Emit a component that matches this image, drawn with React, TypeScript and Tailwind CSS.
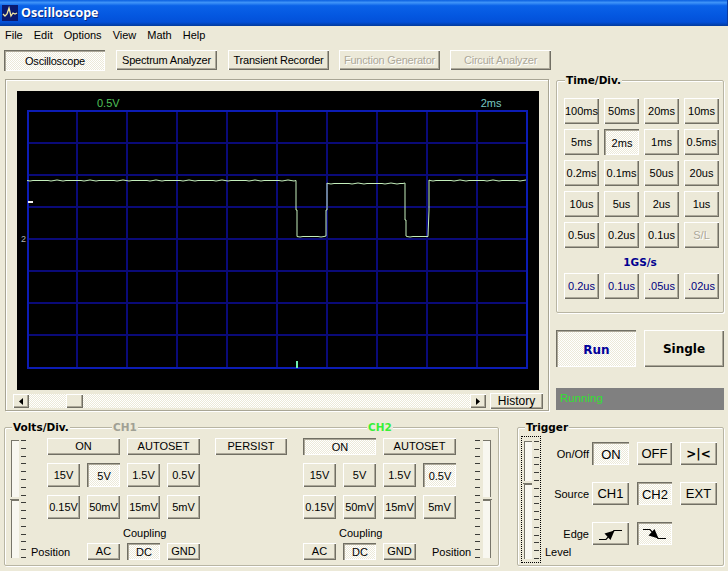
import type { ReactNode } from "react";

const SANS = "font-['Liberation_Sans',Arial,sans-serif]";
const BOLD = "font-['DejaVu_Sans',Verdana,sans-serif] font-bold";
const DITHER = "bg-[repeating-conic-gradient(#ffffff_0_25%,#ece9d8_0_50%)] bg-[length:2px_2px]";
const RAISED = "shadow-[inset_1px_1px_0_#ffffff,inset_-1px_-1px_0_#716f64,inset_-2px_-2px_0_#aca899]";
const SUNKEN = "shadow-[inset_1px_1px_0_#716f64,inset_2px_2px_0_#aca899,inset_-1px_-1px_0_#ffffff]";

function Btn({ children, on, off, size = "text-[11px]", className = "" }: { children?: ReactNode; on?: boolean; off?: boolean; size?: string; className?: string }) {
  return (
    <div
      className={`flex items-center justify-center whitespace-nowrap leading-none ${size} ${
        on ? `${DITHER} ${SUNKEN} pl-px pt-[2px]` : `bg-[#ece9d8] ${RAISED}`
      } ${off ? "text-[#aca899] [text-shadow:1px_1px_0_#ffffff]" : ""} ${className}`}
    >
      {children}
    </div>
  );
}

function Group({ title, className = "", children }: { title: ReactNode; className?: string; children: ReactNode }) {
  return (
    <div className={`relative rounded-[2px] border border-[#b8b5a3] shadow-[1px_1px_0_#ffffff,inset_1px_1px_0_#ffffff] ${className}`}>
      {title}
      {children}
    </div>
  );
}

function Legend({ children, className = "" }: { children: ReactNode; className?: string }) {
  return <span className={`absolute -top-[7px] bg-[#ece9d8] text-[10.5px] leading-[13px] ${BOLD} ${className}`}>{children}</span>;
}

function Ticks({ className = "" }: { className?: string }) {
  return (
    <div className={`flex h-[118px] w-[5px] flex-col justify-between ${className}`}>
      {Array.from({ length: 16 }, (_, i) => (
        <div key={i} className="h-px w-full bg-[#3c3c38]" />
      ))}
    </div>
  );
}

function Track({ top }: { top: number }) {
  return (
    <div className="flex h-[118px] w-[8px] flex-col bg-[#f8f7f0]">
      <div className="border-l border-t border-[#77756a] bg-[#f8f7f0]" style={{ height: top }} />
      <div className="h-[3px] -ml-px w-[9px] border-b border-[#77756a] bg-[#ece9d8]" />
      <div className="flex-1 border-l border-t border-[#77756a]" />
    </div>
  );
}

function Channel({ on, volts, position }: { on: boolean; volts: string; position: "left" | "right" }) {
  const row = (labels: string[]) =>
    labels.map((v) => (
      <Btn key={v} on={v === volts} className="h-[24px]">
        {v}
      </Btn>
    ));
  return (
    <div className="grid grid-cols-[repeat(4,33px)] grid-rows-[17px_32px_32px_24px_17px] gap-x-[7px]">
      <Btn on={on} className="col-span-2 h-[17px]">ON</Btn>
      <Btn className="col-span-2 h-[17px]">AUTOSET</Btn>
      <div className="col-span-4 grid grid-cols-subgrid pt-[8px]">{row(["15V", "5V", "1.5V", "0.5V"])}</div>
      <div className="col-span-4 grid grid-cols-subgrid pt-[8px]">{row(["0.15V", "50mV", "15mV", "5mV"])}</div>
      <div className={`col-span-4 flex items-end pb-[3px] text-[11px] leading-[14px] ${position === "left" ? "pl-[76px]" : "pl-[36px]"}`}>Coupling</div>
      {position === "left" && <div className="-ml-[16px] flex items-end whitespace-nowrap pb-px text-[11px] leading-[14px]">Position</div>}
      <Btn className="h-[17px]">AC</Btn>
      <Btn on className="h-[17px]">DC</Btn>
      <Btn className="h-[17px]">GND</Btn>
      {position === "right" && <div className="ml-[9px] flex items-end whitespace-nowrap pb-px text-[11px] leading-[14px]">Position</div>}
    </div>
  );
}

function EdgeIcon({ falling }: { falling?: boolean }) {
  return (
    <svg width="24" height="14" viewBox="0 0 24 14" className={falling ? "-scale-y-100" : ""}>
      <path d="M0 12.5H7L15 3.5H23" fill="none" stroke="#000" strokeWidth="1.2" />
      <path d="M5.5 6.5L11.5 13L15.5 3.5Z" fill="#000" />
    </svg>
  );
}

function TraceIcon() {
  return (
    <svg width="16" height="16" viewBox="0 0 16 16" className="bg-[#0a1a70]">
      <path d="M1 9L3 11L5 9L7 3L9 11L11 8L13 9L15 8" fill="none" stroke="#f4e9a0" strokeWidth="1.3" />
    </svg>
  );
}

function Arrow({ right }: { right?: boolean }) {
  return (
    <svg width="4" height="7" viewBox="0 0 4 7">
      <path d={right ? "M0 0L4 3.5L0 7Z" : "M4 0L0 3.5L4 7Z"} fill="#000" />
    </svg>
  );
}

// noisy trace along one level
function wobble(x0: number, x1: number, y: number) {
  const pts: string[] = [];
  for (let x = x0, i = 0; x <= x1; x += 3, i++) {
    const n = [0, 1, 0, 0, -1, 0, 0, 1, 0, 0, 0][(i * 7) % 11];
    pts.push(`${x},${y + n * 0.5}`);
  }
  return pts.join(" ");
}

const TRACE = [
  wobble(0, 267, 70.5),
  "269,70.5 269,100 270,100 270,126",
  wobble(270, 298, 126.5),
  "299,126 299,100 300,100 300,73",
  wobble(301, 378, 73.5),
  "378,73 378,110 379,110 379,126",
  wobble(380, 401, 126.5),
  "401,126 402,100 402,70",
  wobble(403, 500, 70.5),
].join(" ");

function Screen() {
  const vs = Array.from({ length: 9 }, (_, i) => 50 + i * 50);
  const hs = [33, 65, 97, 129, 161, 193, 225];
  return (
    <div className="relative ml-[11px] mt-[11px] h-[299px] w-[522px] bg-black">
      <div className="flex h-[19px] items-end text-[11px] leading-[13px]">
        <span className="ml-[80px] text-[#4fc25a]">0.5V</span>
        <span className="ml-[361px] text-[#78c8c0]">2ms</span>
      </div>
      <svg width="502" height="260" viewBox="0 0 502 260" className="ml-[10px] block" shapeRendering="crispEdges">
        {vs.map((x) => (
          <line key={x} x1={x} x2={x} y1="0" y2="258" stroke="#0a0a78" strokeWidth="2" />
        ))}
        {hs.map((y) => (
          <line key={y} x1="0" x2="500" y1={y} y2={y} stroke="#0a0a78" strokeWidth="2" />
        ))}
        <rect x="1" y="1" width="499" height="257" fill="none" stroke="#0c1cb4" strokeWidth="2" />
        <polyline points={TRACE} fill="none" stroke="#c4eebc" strokeWidth="1" shapeRendering="auto" />
        <rect x="1" y="91" width="5" height="2" fill="#f0f0f0" />
        <rect x="269" y="251" width="2" height="7" fill="#70f0b0" />
      </svg>
      <span className="absolute left-[4px] top-[143px] text-[9px] leading-[11px] text-[#b0b0b0]">2</span>
    </div>
  );
}

function ScrollBar() {
  return (
    <div className="ml-[7px] mt-[3px] flex items-center">
      <div className={`flex h-[14px] w-[473px] ${DITHER}`}>
        <Btn className="h-[14px] w-[16px]"><Arrow /></Btn>
        <Btn className="ml-[37px] h-[14px] w-[17px]" />
        <Btn className="ml-auto h-[14px] w-[16px]"><Arrow right /></Btn>
      </div>
      <Btn size="text-[12px]" className="ml-[4px] h-[16px] w-[53px]">History</Btn>
    </div>
  );
}

const TIME_ROWS = [
  ["100ms", "50ms", "20ms", "10ms"],
  ["5ms", "2ms", "1ms", "0.5ms"],
  ["0.2ms", "0.1ms", "50us", "20us"],
  ["10us", "5us", "2us", "1us"],
  ["0.5us", "0.2us", "0.1us", "S/L"],
];

function TimeDiv() {
  return (
    <Group title={<Legend className="left-[8px] px-px">Time/Div.</Legend>} className="h-[233px] w-[168px] px-[7px] pt-[17px]">
      <div className="grid grid-cols-[repeat(4,35px)] gap-x-[5px] gap-y-[5px]">
        {TIME_ROWS.flat().map((t) => (
          <Btn key={t} on={t === "2ms"} off={t === "S/L"} className="h-[26px]">
            {t}
          </Btn>
        ))}
      </div>
      <div className={`h-[25px] pt-[8px] text-center text-[10.5px] leading-[13px] text-[#000090] ${BOLD}`}>1GS/s</div>
      <div className="grid grid-cols-[repeat(4,35px)] gap-x-[5px]">
        {["0.2us", "0.1us", ".05us", ".02us"].map((t) => (
          <Btn key={t} className="h-[26px] text-[#000080]">
            {t}
          </Btn>
        ))}
      </div>
    </Group>
  );
}

function TriggerRow({ label, children }: { label: string; children: ReactNode }) {
  return (
    <div className="flex h-[23px] items-center">
      <div className="w-[44px] text-right text-[11px] leading-[14px]">{label}</div>
      {children}
    </div>
  );
}

function Trigger() {
  return (
    <Group title={<Legend className="left-[7px] px-px">Trigger</Legend>} className="ml-[18px] flex h-[139px] w-[207px] pl-[3px] pt-[8px]">
      <div className="flex h-[127px] w-[20px] border border-dotted border-black pl-[2px] pt-[4px]">
        <Track top={40} />
        <Ticks className="ml-[2px]" />
      </div>
      <div className="ml-[4px] flex flex-col gap-y-[17px] pt-[6px]">
        <TriggerRow label="On/Off">
          <Btn on size="text-[13px]" className="ml-[3px] h-[23px] w-[37px]">ON</Btn>
          <Btn size="text-[13px]" className="ml-[8px] h-[23px] w-[35px]">OFF</Btn>
          <Btn size="text-[12px]" className={`ml-[8px] h-[23px] w-[37px] ${BOLD}`}>&gt;|&lt;</Btn>
        </TriggerRow>
        <TriggerRow label="Source">
          <Btn size="text-[13px]" className="ml-[3px] h-[23px] w-[37px]">CH1</Btn>
          <Btn on size="text-[13px]" className="ml-[8px] h-[23px] w-[35px]">CH2</Btn>
          <Btn size="text-[13px]" className="ml-[8px] h-[23px] w-[37px]">EXT</Btn>
        </TriggerRow>
        <TriggerRow label="Edge">
          <Btn className="ml-[3px] h-[23px] w-[37px]"><EdgeIcon /></Btn>
          <Btn on className="ml-[8px] h-[23px] w-[35px]"><EdgeIcon falling /></Btn>
        </TriggerRow>
        <div className="-mt-[17px] text-[11px] leading-[14px]">Level</div>
      </div>
    </Group>
  );
}

export default function App() {
  return (
    <div className={`flex h-[571px] w-[728px] flex-col overflow-hidden bg-[#ece9d8] text-black ${SANS}`}>
      <div className="flex h-[26px] items-center border-r border-[#0a3aa0] bg-[linear-gradient(#0a5fe0_0%,#3f94f8_10%,#0a62e8_22%,#0457e0_60%,#0350d8_85%,#023a9c_100%)] pl-[2px]">
        <TraceIcon />
        <span className="ml-[3px] font-['Open_Sans',sans-serif] text-[12.5px] font-bold text-white [text-shadow:1px_1px_0_#0a2a80]">Oscilloscope</span>
      </div>
      <div className="flex h-[19px] items-center gap-x-[11px] pl-[5px] text-[11px]">
        {["File", "Edit", "Options", "View", "Math", "Help"].map((m) => (
          <span key={m}>{m}</span>
        ))}
      </div>
      <div className="mt-[5px] flex h-[21px] pl-[4px] tracking-[-0.2px]">
        <Btn on className="h-[21px] w-[101px]">Oscilloscope</Btn>
        <Btn className="ml-[11px] h-[20px] w-[101px]">Spectrum Analyzer</Btn>
        <Btn className="ml-[11px] h-[20px] w-[101px]">Transient Recorder</Btn>
        <Btn off className="ml-[10px] h-[20px] w-[101px]">Function Generator</Btn>
        <Btn off className="ml-[10px] h-[20px] w-[101px]">Circuit Analyzer</Btn>
      </div>
      <div className="mt-[8px] flex">
        <div className="ml-[5px] h-[332px] w-[544px] border border-[#a8a594] shadow-[1px_1px_0_#ffffff,inset_1px_1px_0_#ffffff]">
          <Screen />
          <ScrollBar />
        </div>
        <div className="ml-[7px] flex flex-col pt-px">
          <TimeDiv />
          <div className="mt-[17px] flex gap-x-[8px]">
            <Btn on size="text-[12px]" className={`h-[37px] w-[80px] text-[#00009a] ${BOLD}`}>Run</Btn>
            <Btn size="text-[12px]" className={`h-[37px] w-[80px] ${BOLD}`}>Single</Btn>
          </div>
          <div className="mt-[21px] flex h-[22px] w-[168px] items-center bg-[#808080] pl-[4px] text-[11.5px] text-[#30e030]">Running</div>
        </div>
      </div>
      <div className="mt-[16px] flex pl-[4px]">
        <Group
          title={
            <>
              <Legend className="left-[7px] px-px">Volts/Div.</Legend>
              <Legend className="left-[107px] px-px text-[#a0a094]">CH1</Legend>
              <Legend className="left-[362px] px-px text-[#38f038]">CH2</Legend>
            </>
          }
          className="flex h-[139px] w-[495px] pl-[6px] pt-[10px]"
        >
          <div className="mt-[2px] flex">
            <Track top={57} />
            <Ticks className="ml-[2px]" />
          </div>
          <div className="ml-[21px]">
            <Channel on={false} volts="5V" position="left" />
          </div>
          <Btn className="ml-[15px] h-[17px] w-[72px]">PERSIST</Btn>
          <div className="ml-[16px]">
            <Channel on volts="0.5V" position="right" />
          </div>
          <div className="ml-[19px] mt-[2px] flex">
            <Ticks />
            <div className="ml-[3px] -scale-x-100">
              <Track top={57} />
            </div>
          </div>
        </Group>
        <Trigger />
      </div>
    </div>
  );
}
